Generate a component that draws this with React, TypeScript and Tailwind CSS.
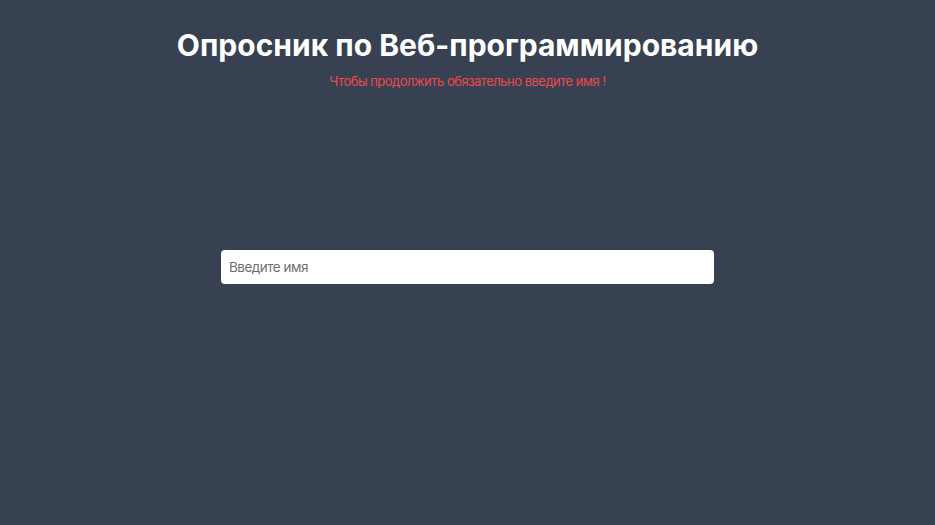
export default function App() {
  return (
    <div className="min-h-screen bg-[#374151] flex flex-col items-center pt-[27px] font-['Inter',sans-serif]">
      <h1 className="text-3xl font-bold text-white">Опросник по Веб-программированию</h1>
      <p className="mt-2 text-[13px] leading-5 tracking-[-0.5px] text-[#ec4a4f]">Чтобы продолжить обязательно введите имя !</p>
      <input
        type="text"
        placeholder="Введите имя"
        className="mt-[159px] w-[493px] h-[34px] rounded bg-white px-2 text-[13.5px] tracking-[-0.5px] text-gray-900 placeholder:text-[#6f6f6f] outline-none"
      />
    </div>
  );
}
